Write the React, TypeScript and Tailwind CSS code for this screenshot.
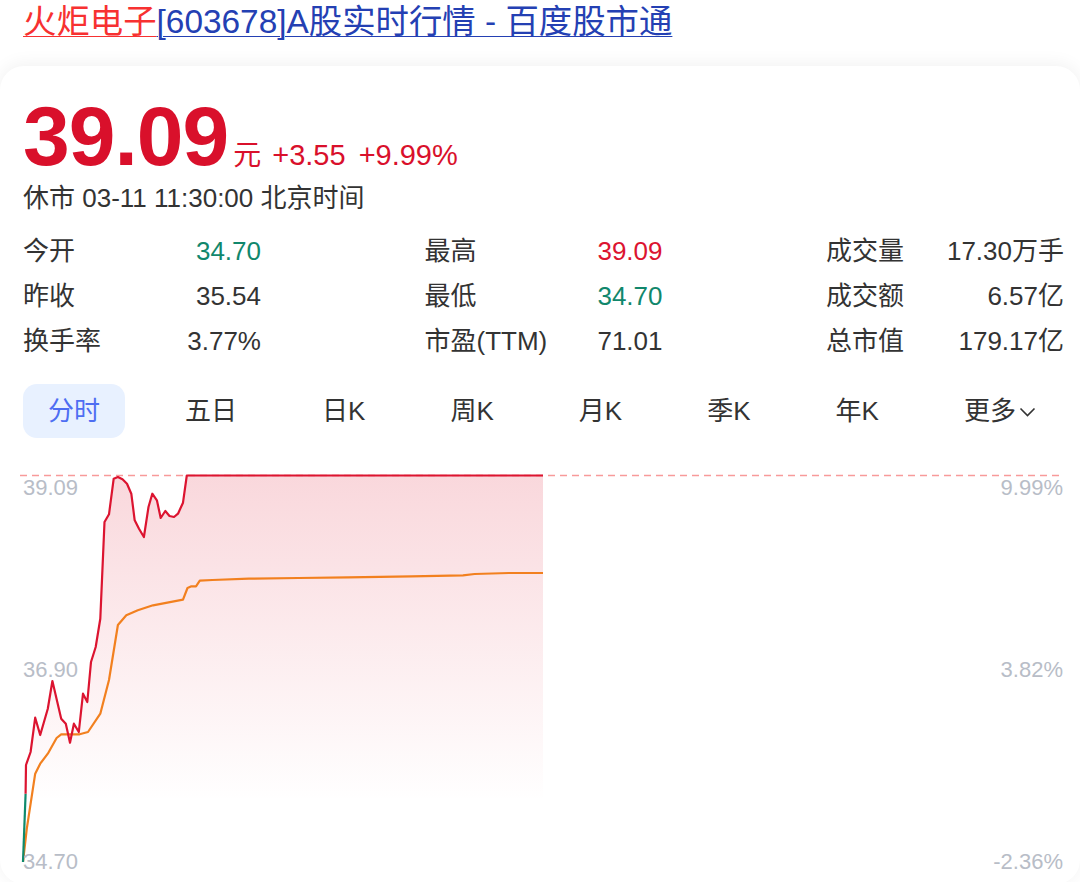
import React from "react";

const redPts: [number, number][] = [
  [25.6, 331.7], [26, 303], [30.6, 290], [35.2, 255.7], [40.2, 273], [47.8, 246.7],
  [52.4, 219], [61.2, 256.7], [65.8, 261.7], [70, 280.7], [73.9, 261.7], [78.8, 270],
  [83, 231.7], [87.3, 240], [91, 200], [95.7, 185], [100.3, 156.7], [104.5, 60],
  [109, 52.3], [113.7, 16.7], [117.9, 15], [122.5, 17.3], [127, 21.7], [131.3, 31.7],
  [134.7, 58.3], [139, 66.7], [143.9, 75], [148.5, 45], [152.3, 31.7], [156.9, 38.3],
  [160.7, 56], [165.3, 49], [169.5, 54], [174, 55], [178, 51.7], [183, 40.7],
  [186.8, 13.5], [543, 13.5],
];

const avgPts: [number, number][] = [
  [23, 400], [26.8, 366.7], [35.2, 311.7], [40.2, 301.7], [47.8, 291.7], [56.6, 276],
  [61.2, 272.3], [79.6, 272.3], [88, 270], [100.3, 251.7], [109, 218], [117.9, 163],
  [126.3, 153.3], [137.8, 148.3], [153, 143.3], [183, 137.7], [187.5, 126], [191.4, 124.3],
  [196, 124.3], [199.8, 118.7], [212.4, 118], [248.8, 116.7], [298.5, 116], [348.3, 115.3],
  [411.4, 114.3], [463, 113.3], [474.6, 112], [509, 111], [543, 111],
];

const toPath = (pts: [number, number][]) =>
  pts.map((p, i) => `${i === 0 ? "M" : "L"}${p[0]} ${p[1]}`).join(" ");

const stats: [string, string, string][] = [
  ["今开", "34.70", "text-[#11876c]"],
  ["最高", "39.09", "text-[#dc1430]"],
  ["成交量", "17.30万手", "text-[#333333]"],
  ["昨收", "35.54", "text-[#333333]"],
  ["最低", "34.70", "text-[#11876c]"],
  ["成交额", "6.57亿", "text-[#333333]"],
  ["换手率", "3.77%", "text-[#333333]"],
  ["市盈(TTM)", "71.01", "text-[#333333]"],
  ["总市值", "179.17亿", "text-[#333333]"],
];

const tabs = ["分时", "五日", "日K", "周K", "月K", "季K", "年K"];

export default function App() {
  const fillPath =
    "M23 400 " + redPts.map((p) => `L${p[0]} ${p[1]}`).join(" ") + " L543 400 Z";
  return (
    <div className="w-[1080px] h-[882px] overflow-hidden bg-white font-['Liberation_Sans','Noto_Sans_CJK_SC',sans-serif] text-[#333333]">
      <div className="px-[23px] text-[33.4px] leading-[44px] whitespace-nowrap">
        <span className="text-[#f73131] underline decoration-1 underline-offset-[3px]">火炬电子</span>
        <span className="text-[#2440b3] underline decoration-1 underline-offset-[3px]">[603678]A股实时行情 - 百度股市通</span>
      </div>

      <div className="mt-[22px] rounded-[24px] bg-white shadow-[0_-2px_18px_rgba(0,0,0,0.06)] pt-[28px]">
        <div className="pl-[23px] pr-[16px]">
          <div className="flex items-baseline text-[#d9102b] whitespace-nowrap">
            <span className="text-[84px] font-bold leading-[84px] tracking-[-1px]">39.09</span>
            <span className="ml-[5px] text-[28px]">元</span>
            <span className="ml-[11px] text-[29px]">+3.55</span>
            <span className="ml-[13px] text-[29px]">+9.99%</span>
          </div>
          <div className="h-[40px] leading-[40px] text-[26px] text-[#333333] whitespace-nowrap">
            休市 03-11 11:30:00 北京时间
          </div>

          <div className="mt-[11px] grid grid-cols-[238px_238px_238px] justify-between">
            {stats.map(([label, value, color], i) => (
              <div key={i} className="flex h-[45px] items-center justify-between text-[26px] whitespace-nowrap">
                <span className="text-[#333333]">{label}</span>
                <span className={color}>{value}</span>
              </div>
            ))}
          </div>

          <div className="mt-[20px] flex items-center justify-between text-[26px]">
            {tabs.map((t, i) => (
              <div
                key={t}
                className={
                  i === 0
                    ? "flex h-[54px] items-center rounded-[14px] bg-[#e8f1ff] px-[25px] text-[#4e6ef2]"
                    : "flex h-[54px] items-center px-[25px] text-[#333333]"
                }
              >
                {t}
              </div>
            ))}
            <div className="flex h-[54px] items-center pl-[25px] pr-[28px] text-[#333333]">
              更多
              <svg width="17" height="10" viewBox="0 0 17 10" className="ml-[3px] mt-[2px]">
                <polyline points="1.5,1.5 8.5,8.5 15.5,1.5" fill="none" stroke="#333" strokeWidth="1.6" />
              </svg>
            </div>
          </div>
        </div>

        <div className="relative mt-[24px] h-[422px] w-[1080px]">
          <svg width="1080" height="422" viewBox="0 0 1080 422" className="absolute left-0 top-0">
            <defs>
              <linearGradient id="fillg" x1="0" y1="13" x2="0" y2="340" gradientUnits="userSpaceOnUse">
                <stop offset="0" stopColor="#e0243c" stopOpacity="0.18" />
                <stop offset="1" stopColor="#e0243c" stopOpacity="0" />
              </linearGradient>
            </defs>
            <path d={fillPath} fill="url(#fillg)" />
            <line x1="20" y1="13.5" x2="1063" y2="13.5" stroke="#f89a9a" strokeWidth="1.6" strokeDasharray="7 5" />
            <path d={toPath(avgPts)} fill="none" stroke="#f2801f" strokeWidth="2.2" strokeLinejoin="round" />
            <path d="M23 400 L25.6 331.7" fill="none" stroke="#0f8a6c" strokeWidth="2.2" />
            <path d={toPath(redPts)} fill="none" stroke="#dc1430" strokeWidth="2.2" strokeLinejoin="round" />
          </svg>
          <div className="absolute left-[23px] top-[15px] text-[22px] leading-[22px] text-[#b8bdc7]">39.09</div>
          <div className="absolute left-[23px] top-[197px] text-[22px] leading-[22px] text-[#b8bdc7]">36.90</div>
          <div className="absolute left-[23px] top-[389px] text-[22px] leading-[22px] text-[#b8bdc7]">34.70</div>
          <div className="absolute right-[17px] top-[15px] text-[22px] leading-[22px] text-[#b8bdc7]">9.99%</div>
          <div className="absolute right-[17px] top-[197px] text-[22px] leading-[22px] text-[#b8bdc7]">3.82%</div>
          <div className="absolute right-[17px] top-[389px] text-[22px] leading-[22px] text-[#b8bdc7]">-2.36%</div>
        </div>
      </div>
    </div>
  );
}
